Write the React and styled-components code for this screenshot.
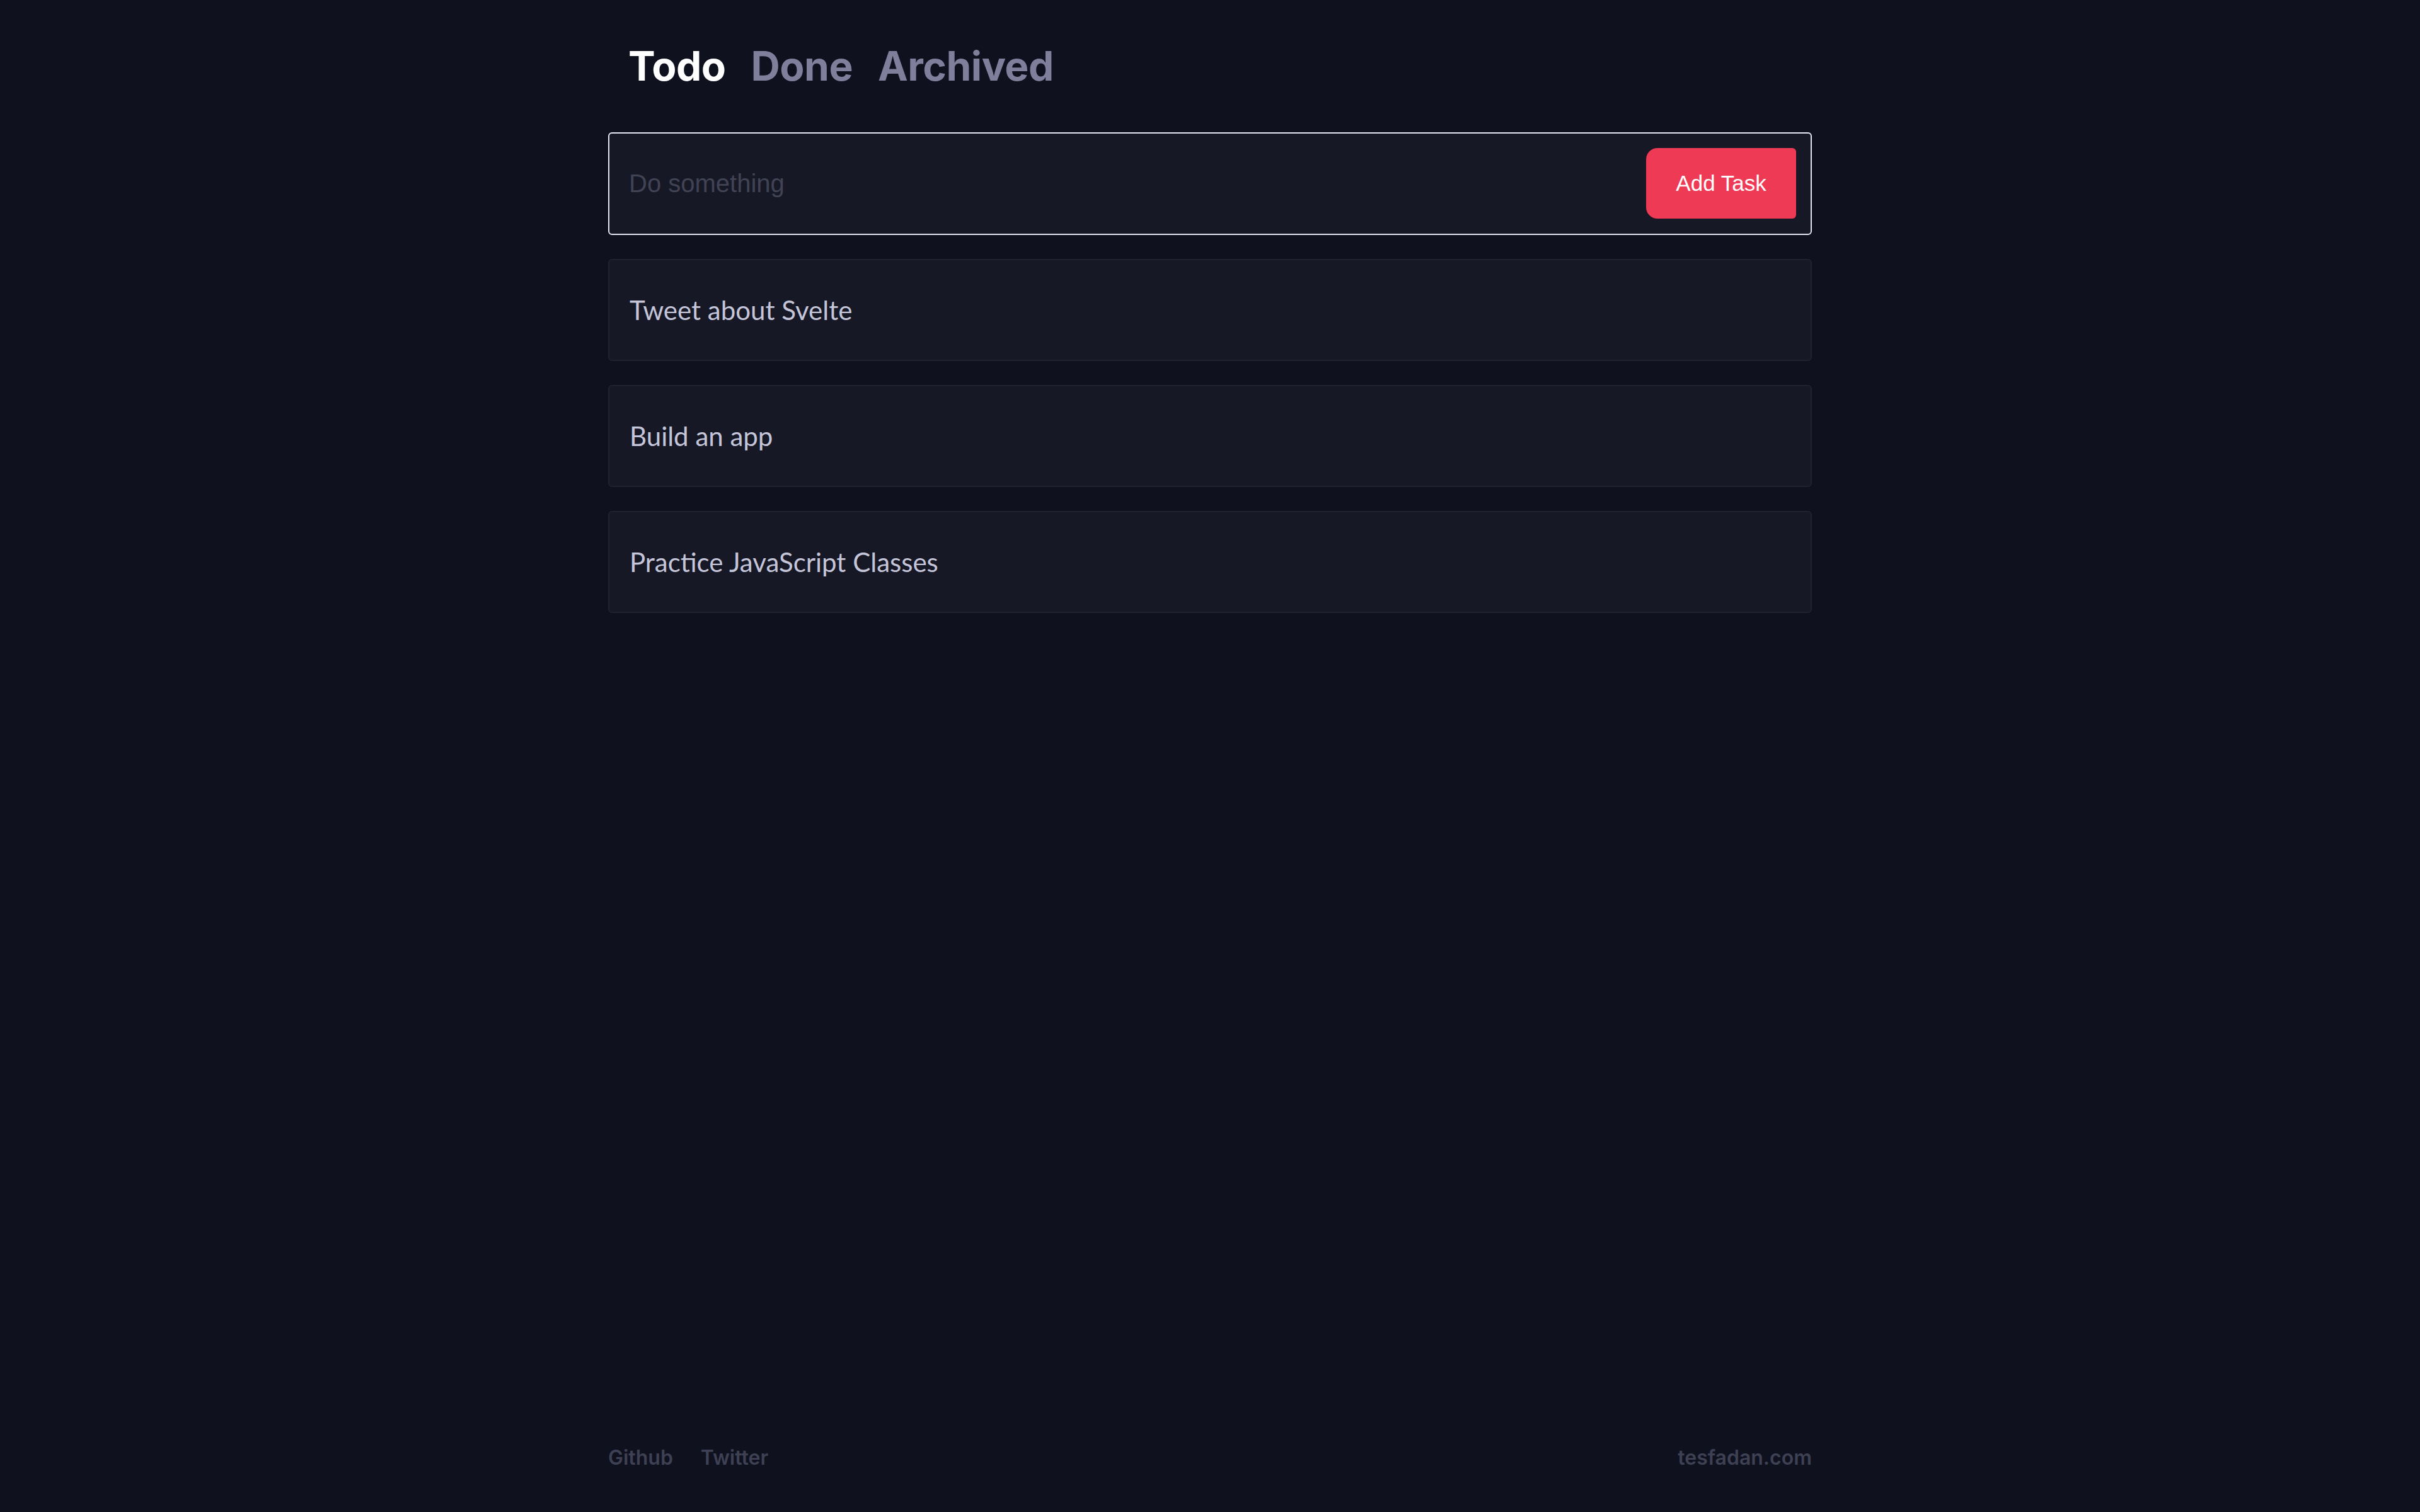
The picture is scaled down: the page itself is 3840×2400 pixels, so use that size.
import React, { useState } from "react";
import styled, { createGlobalStyle } from "styled-components";

const GlobalStyle = createGlobalStyle`
  html, body {
    margin: 0;
    padding: 0;
    background: #0f111e;
  }
  * { box-sizing: border-box; }
`;

const Page = styled.div`
  min-height: 100vh;
  width: 1910px;
  margin: 0 auto;
  display: flex;
  flex-direction: column;
  padding-top: 67px;
  padding-bottom: 67px;
  font-family: "Lato", "Noto Sans", sans-serif;
`;

const Tabs = styled.nav`
  display: flex;
  align-items: baseline;
  gap: 40px;
  padding-left: 32px;
  margin-bottom: 66px;
`;

const Tab = styled.button`
  background: none;
  border: none;
  padding: 0;
  cursor: pointer;
  font-family: "Inter", "Lato", sans-serif;
  font-weight: 700;
  font-size: 64px;
  line-height: 1.2;
  letter-spacing: -0.5px;
  color: ${(p) => (p.$active ? "#ffffff" : "#7f7f9b")};
`;

const Form = styled.form`
  display: flex;
  align-items: center;
  height: 163px;
  padding: 0 23px 0 31px;
  background: #161825;
  border: 2px solid #e4e6f2;
  border-radius: 6px;
  margin-bottom: 38px;
`;

const Input = styled.input`
  flex: 1;
  min-width: 0;
  background: transparent;
  border: none;
  outline: none;
  font-family: "Liberation Sans", Arial, sans-serif;
  font-size: 40px;
  color: #c4c5d9;
  padding: 0;
  &::placeholder {
    color: #414355;
  }
`;

const AddButton = styled.button`
  width: 238px;
  height: 112px;
  border: none;
  border-radius: 18px 6px 6px 18px;
  background: #ef3a55;
  color: #ffffff;
  font-family: "Liberation Sans", Arial, sans-serif;
  font-size: 35px;
  cursor: pointer;
`;

const List = styled.ul`
  list-style: none;
  margin: 0;
  padding: 0;
  display: flex;
  flex-direction: column;
  gap: 38px;
`;

const Item = styled.li`
  display: flex;
  align-items: center;
  height: 162px;
  padding: 0 32px;
  background: #161825;
  border: 2px solid #20222e;
  border-radius: 6px;
  font-size: 42px;
  color: #c4c5d9;
`;

const Footer = styled.footer`
  margin-top: auto;
  display: flex;
  justify-content: space-between;
  align-items: baseline;
`;

const FooterLinks = styled.div`
  display: flex;
  gap: 44px;
`;

const FooterLink = styled.a`
  font-family: "Inter", "Lato", sans-serif;
  font-weight: 600;
  font-size: 32px;
  line-height: 1.2;
  color: #3e4053;
  text-decoration: none;
`;

export default function App() {
  const [tab, setTab] = useState("Todo");
  const [text, setText] = useState("");
  const [tasks, setTasks] = useState([
    "Tweet about Svelte",
    "Build an app",
    "Practice JavaScript Classes",
  ]);

  const submit = (e) => {
    e.preventDefault();
    if (!text.trim()) return;
    setTasks([...tasks, text.trim()]);
    setText("");
  };

  return (
    <>
      <GlobalStyle />
      <Page>
        <Tabs>
          {["Todo", "Done", "Archived"].map((t) => (
            <Tab key={t} $active={tab === t} onClick={() => setTab(t)}>
              {t}
            </Tab>
          ))}
        </Tabs>
        <Form onSubmit={submit}>
          <Input
            placeholder="Do something"
            value={text}
            onChange={(e) => setText(e.target.value)}
          />
          <AddButton type="submit">Add Task</AddButton>
        </Form>
        <List>
          {tasks.map((t) => (
            <Item key={t}>{t}</Item>
          ))}
        </List>
        <Footer>
          <FooterLinks>
            <FooterLink href="#">Github</FooterLink>
            <FooterLink href="#">Twitter</FooterLink>
          </FooterLinks>
          <FooterLink href="#">tesfadan.com</FooterLink>
        </Footer>
      </Page>
    </>
  );
}
